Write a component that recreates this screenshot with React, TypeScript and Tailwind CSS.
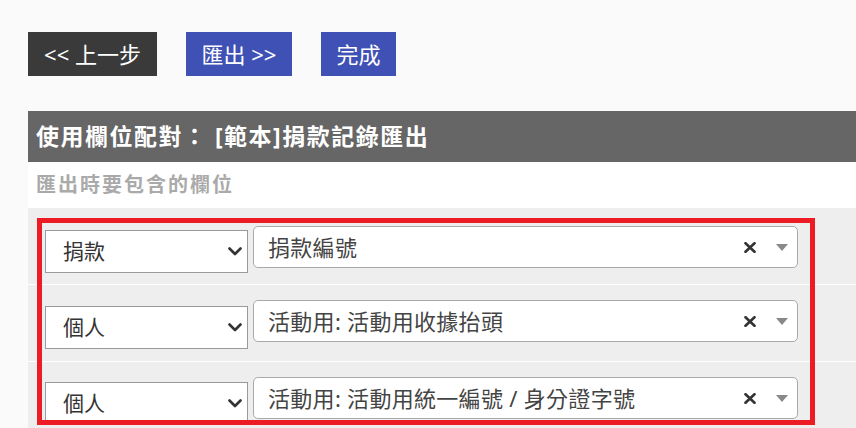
import React from "react";

const FONT = { fontFamily: '"Noto Sans", "Noto Sans CJK TC", sans-serif' };

function Chevron() {
  return (
    <svg width="14" height="9" viewBox="0 0 14 9" className="shrink-0">
      <path d="M1.5 1.5 L7 7 L12.5 1.5" fill="none" stroke="#333" strokeWidth="2.6" strokeLinecap="round" strokeLinejoin="round" />
    </svg>
  );
}

function ClearX() {
  return (
    <svg width="12" height="11" viewBox="0 0 12 11" className="shrink-0">
      <path d="M1.5 1.2 L10.5 9.8 M10.5 1.2 L1.5 9.8" fill="none" stroke="#333" strokeWidth="2.6" strokeLinecap="round" />
    </svg>
  );
}

function Tri() {
  return (
    <svg width="12" height="7" viewBox="0 0 12 7" className="shrink-0">
      <path d="M0 0 L12 0 L6 7 Z" fill="#888" />
    </svg>
  );
}

function Row({ left, right, pt, mt, last }: { left: string; right: string; pt: string; mt: string; last?: boolean }) {
  return (
    <div className={`flex items-start pl-[17px] h-[77px] ${pt} ${last ? "" : "border-b border-white"}`}>
      <div className={`w-[203px] h-[43px] ${mt} bg-white border border-[#9a9a9a] flex items-center pl-[17px] pr-[5px]`}>
        <span className="flex-1 text-[21px] leading-none text-[#333]">{left}</span>
        <Chevron />
      </div>
      <div className="ml-[5px] w-[545px] h-[42px] bg-white border border-[#aaa] rounded-[5px] flex items-center pl-[14px] pr-[9px]">
        <span className="flex-1 text-[22px] tracking-[0.3px] leading-none text-[#444] whitespace-nowrap">{right}</span>
        <ClearX />
        <span className="w-[20px]" />
        <Tri />
      </div>
    </div>
  );
}

export default function App() {
  return (
    <div className="w-[856px] h-[428px] overflow-hidden bg-[#fafafa] relative" style={FONT}>
      <div className="pt-[32px] pl-[28px] flex gap-[29px]">
        <div className="w-[129px] h-[44px] bg-[#3b3a3a] text-white text-[22px] leading-none flex items-center justify-center">&lt;&lt; 上一步</div>
        <div className="w-[106px] h-[44px] bg-[#3f51b5] text-white text-[22px] leading-none flex items-center justify-center">匯出 &gt;&gt;</div>
        <div className="w-[75px] h-[44px] bg-[#3f51b5] text-white text-[22px] leading-none flex items-center justify-center">完成</div>
      </div>
      <div className="ml-[28px] mt-[35px]">
        <div className="h-[51px] bg-[#666666] flex items-center pl-[8px]">
          <span className="text-white font-bold text-[23px] tracking-[1.5px] leading-none">使用欄位配對： [範本]捐款記錄匯出</span>
        </div>
        <div className="h-[46px] bg-white flex items-center pl-[8px]">
          <span className="text-[#aaaaaa] font-bold text-[20px] tracking-[2px] leading-none">匯出時要包含的欄位</span>
        </div>
        <div className="bg-[#eeeeee]">
          <Row left="捐款" right="捐款編號" pt="pt-[18px]" mt="mt-[4px]" />
          <Row left="個人" right="活動用: 活動用收據抬頭" pt="pt-[15px]" mt="mt-[6px]" />
          <Row left="個人" right="活動用: 活動用統一編號 / 身分證字號" pt="pt-[15px]" mt="mt-[5px]" last />
        </div>
      </div>
      <div className="absolute left-[37px] top-[218px] w-[778px] h-[207px] border-[5px] border-[#ed1c24] pointer-events-none" />
    </div>
  );
}
